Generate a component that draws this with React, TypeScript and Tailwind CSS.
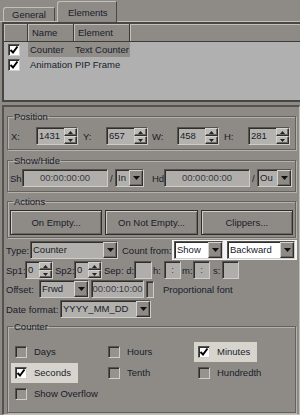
import React from "react";

const sunk =
  "border border-t-[#55534f] border-l-[#55534f] border-b-[#cfcdc9] border-r-[#cfcdc9] shadow-[inset_1px_1px_0_#2f2e2b]";
const raised =
  "border border-t-[#d6d4d0] border-l-[#d6d4d0] border-b-[#2f2e2b] border-r-[#2f2e2b] shadow-[inset_-1px_-1px_0_#6a6864]";

const Down = () => (
  <svg width="7" height="4" viewBox="0 0 7 4">
    <path d="M0 0h7L3.5 4z" fill="#111" />
  </svg>
);

const Tick = () => (
  <svg width="10" height="10" viewBox="0 0 10 10">
    <polyline points="1.5,5 4,7.5 8.5,1.5" fill="none" stroke="#000" strokeWidth="2" />
  </svg>
);

function Spin({ v, w }: { v: string; w: string }) {
  return (
    <div className={`flex h-[18px] ${w} ${sunk} bg-[#b4b2ae]`}>
      <span className="flex-1 pl-[2px] leading-[16px]">{v}</span>
      <div className="flex w-[13px] flex-col">
        <div className={`flex flex-1 items-center justify-center bg-[#bdbbb7] ${raised}`}>
          <svg width="5" height="3" viewBox="0 0 5 3">
            <path d="M0 3h5L2.5 0z" fill="#222" />
          </svg>
        </div>
        <div className={`flex flex-1 items-center justify-center bg-[#bdbbb7] ${raised}`}>
          <svg width="5" height="3" viewBox="0 0 5 3">
            <path d="M0 0h5L2.5 3z" fill="#222" />
          </svg>
        </div>
      </div>
    </div>
  );
}

function Combo({ v, w, light }: { v: string; w: string; light?: boolean }) {
  return (
    <div className={`flex h-[18px] ${w} ${sunk} ${light ? "bg-white" : "bg-[#b2b0ac]"}`}>
      <span className="flex-1 overflow-hidden whitespace-nowrap pl-[2px] leading-[16px]">{v}</span>
      <div className={`flex w-[14px] items-center justify-center bg-[#8e8b86] ${raised}`}>
        <Down />
      </div>
    </div>
  );
}

function Field({ v, w, center }: { v: string; w: string; center?: boolean }) {
  return (
    <div className={`h-[18px] ${w} ${sunk} bg-[#b0aeaa] leading-[16px] ${center ? "text-center text-[#3a3a44]" : ""}`}>
      {v}
    </div>
  );
}

function Check({ on }: { on?: boolean }) {
  return (
    <div
      className={`flex h-[12px] w-[12px] shrink-0 items-center justify-center ${sunk} ${
        on ? "bg-white" : "bg-[#96938e]"
      }`}
    >
      {on && <Tick />}
    </div>
  );
}

function Group({ title, className, children }: { title: string; className: string; children: React.ReactNode }) {
  return (
    <fieldset
      className={`mx-[3px] border border-[#64625e] shadow-[inset_1px_1px_0_#b4b2ad,1px_1px_0_#b4b2ad] ${className}`}
    >
      <legend className="ml-[5px] px-[1px] leading-[11px]">{title}</legend>
      {children}
    </fieldset>
  );
}

function Opt({ label, on, hl, w }: { label: string; on?: boolean; hl?: boolean; w: string }) {
  return (
    <div className={w}>
      <div className={`inline-flex h-[20px] items-center gap-[7px] pl-[4px] pr-[7px] ${hl ? "bg-[#d7d4ce]" : ""}`}>
        <Check on={on} />
        <span>{label}</span>
      </div>
    </div>
  );
}

const btn =
  "flex h-[25px] flex-1 items-center justify-center border border-[#2f2e2b] bg-[#8e8b86] shadow-[inset_1px_1px_0_#cfcdc9,inset_-1px_-1px_0_#6a6864]";

export default function App() {
  return (
    <div className="h-[415px] w-[300px] overflow-hidden bg-[#8e8b86] font-['Liberation_Sans',Arial,sans-serif] text-[9.5px] leading-[11px] text-[#181c2a]">
      {/* tabs */}
      <div className="flex h-[22px] items-end border-b border-[#c2c0bb] pl-[3px]">
        <div className="flex h-[14px] w-[52px] items-center rounded-tl-[3px] border-l border-t border-r border-l-[#c2c0bb] border-t-[#c2c0bb] border-r-[#4a4845] pl-[8px]">
          General
        </div>
        <div className="relative z-10 -mb-px ml-[2px] flex h-[21px] w-[60px] items-start rounded-tl-[3px] border-l border-t border-r border-l-[#c2c0bb] border-t-[#c2c0bb] border-r-[#4a4845] bg-[#8e8b86] pl-[10px] pt-[5px]">
          Elements
        </div>
      </div>

      {/* list */}
      <div className="ml-[2px] flex h-[80px] flex-col border-2 border-r-0 border-[#484643] bg-[#b0b0b0]">
        <div className="flex h-[18px] shrink-0 border-b border-[#3d3c39] bg-[#8e8b86]">
          <div className="w-[24px] border-r border-[#3d3c39] shadow-[inset_1px_1px_0_#c2c0bb]" />
          <div className="flex w-[46px] items-center border-r border-[#3d3c39] pl-[4px] shadow-[inset_1px_1px_0_#c2c0bb]">
            Name
          </div>
          <div className="flex w-[56px] items-center border-r border-[#3d3c39] pl-[4px] shadow-[inset_1px_1px_0_#c2c0bb]">
            Element
          </div>
          <div className="flex-1 shadow-[inset_1px_1px_0_#c2c0bb]" />
        </div>
        <div className="flex h-[15px] items-center">
          <div className="w-[24px] pl-[4px]">
            <Check on />
          </div>
          <div className="flex h-full w-[102px] items-center bg-[#918e89]">
            <span className="w-[46px] pl-[2px]">Counter</span>
            <span className="pl-[1px]">Text Counter</span>
          </div>
        </div>
        <div className="flex h-[15px] items-center">
          <div className="w-[24px] pl-[4px]">
            <Check on />
          </div>
          <span className="w-[46px] pl-[2px]">Animation</span>
          <span className="pl-[1px]">PIP Frame</span>
        </div>
      </div>

      {/* panel */}
      <div className="ml-[2px] mt-[3px] border-l-2 border-t-2 border-r border-b border-l-[#55534f] border-t-[#55534f] border-r-[#c2c0bb] border-b-[#c2c0bb] pb-[1px]">
        <Group title="Position" className="mt-[4px] pb-[4px]">
          <div className="mt-[5px] flex items-center pl-[3px]">
            <span className="w-[25px]">X:</span>
            <Spin v="1431" w="w-[42px]" />
            <span className="ml-[5px] w-[23px]">Y:</span>
            <Spin v="657" w="w-[42px]" />
            <span className="ml-[4px] w-[25px]">W:</span>
            <Spin v="458" w="w-[42px]" />
            <span className="ml-[5px] w-[24px]">H:</span>
            <Spin v="281" w="w-[42px]" />
          </div>
        </Group>

        <Group title="Show/Hide" className="mt-[5px] pb-[4px]">
          <div className="mt-[3px] flex items-center pl-[2px]">
            <span className="w-[12px]">Sh</span>
            <Field v="00:00:00:00" w="w-[86px]" center />
            <span className="ml-[2px] w-[4px]">/</span>
            <div className="ml-[1px]">
              <Combo v="In" w="w-[29px]" />
            </div>
            <span className="ml-[8px] w-[12px]">Hd</span>
            <Field v="00:00:00:00" w="w-[86px]" center />
            <span className="ml-[2px] w-[4px]">/</span>
            <div className="ml-[1px]">
              <Combo v="Ou" w="w-[35px]" />
            </div>
          </div>
        </Group>

        <Group title="Actions" className="mt-[4px] pb-[2px]">
          <div className="mt-[3px] flex gap-[3px] px-[2px]">
            <button className={btn}>On Empty...</button>
            <button className={btn}>On Not Empty...</button>
            <button className={btn}>Clippers...</button>
          </div>
        </Group>

        <div className="mt-[2px] flex h-[20px] items-center pl-[2px]">
          <span className="w-[24px]">Type:</span>
          <Combo v="Counter" w="w-[88px]" />
          <span className="ml-[4px] w-[50px] whitespace-nowrap">Count from:</span>
          <div className="flex h-[20px] items-center gap-[4px] bg-[#f2f2f2] px-[2px]">
            <Combo v="Show" w="w-[49px]" light />
            <Combo v="Backward" w="w-[68px]" light />
          </div>
        </div>

        <div className="flex h-[20px] items-center pl-[2px]">
          <span className="w-[19px]">Sp1:</span>
          <Spin v="0" w="w-[28px]" />
          <span className="ml-[2px] w-[19px]">Sp2:</span>
          <Spin v="0" w="w-[28px]" />
          <span className="ml-[2px] w-[30px] whitespace-nowrap">Sep: d:</span>
          <Field v="" w="w-[18px]" />
          <span className="ml-[1px] w-[11px]">h:</span>
          <Field v=":" w="w-[17px]" center />
          <span className="ml-[1px] w-[11px]">m:</span>
          <Field v=":" w="w-[17px]" center />
          <span className="ml-[3px] w-[9px]">s:</span>
          <Field v="" w="w-[17px]" />
        </div>

        <div className="flex h-[18px] items-center pl-[2px]">
          <span className="w-[33px]">Offset:</span>
          <Combo v="Frwd" w="w-[50px]" />
          <div className="ml-[2px]">
            <Field v="00:00:10:00" w="w-[53px]" center />
          </div>
          <div className={`ml-[2px] h-[17px] w-[8px] bg-[#96938e] ${sunk}`} />
          <span className="ml-[9px]">Proportional font</span>
        </div>

        <div className="mt-[2px] flex h-[18px] items-center pl-[2px]">
          <span className="w-[54px] whitespace-nowrap">Date format:</span>
          <Combo v="YYYY_MM_DD" w="w-[91px]" />
        </div>

        <Group title="Counter" className="mt-[3px] pb-[8px]">
          <div className="mt-[9px] pl-[3px]">
            <div className="flex h-[21px] items-center">
              <Opt label="Days" w="w-[93px]" />
              <Opt label="Hours" w="w-[90px]" />
              <Opt label="Minutes" on hl w="w-[90px]" />
            </div>
            <div className="flex h-[21px] items-center">
              <Opt label="Seconds" on hl w="w-[93px]" />
              <Opt label="Tenth" w="w-[90px]" />
              <Opt label="Hundredth" w="w-[90px]" />
            </div>
            <div className="flex h-[21px] items-center">
              <Opt label="Show Overflow" w="w-[120px]" />
            </div>
          </div>
        </Group>
      </div>
    </div>
  );
}
